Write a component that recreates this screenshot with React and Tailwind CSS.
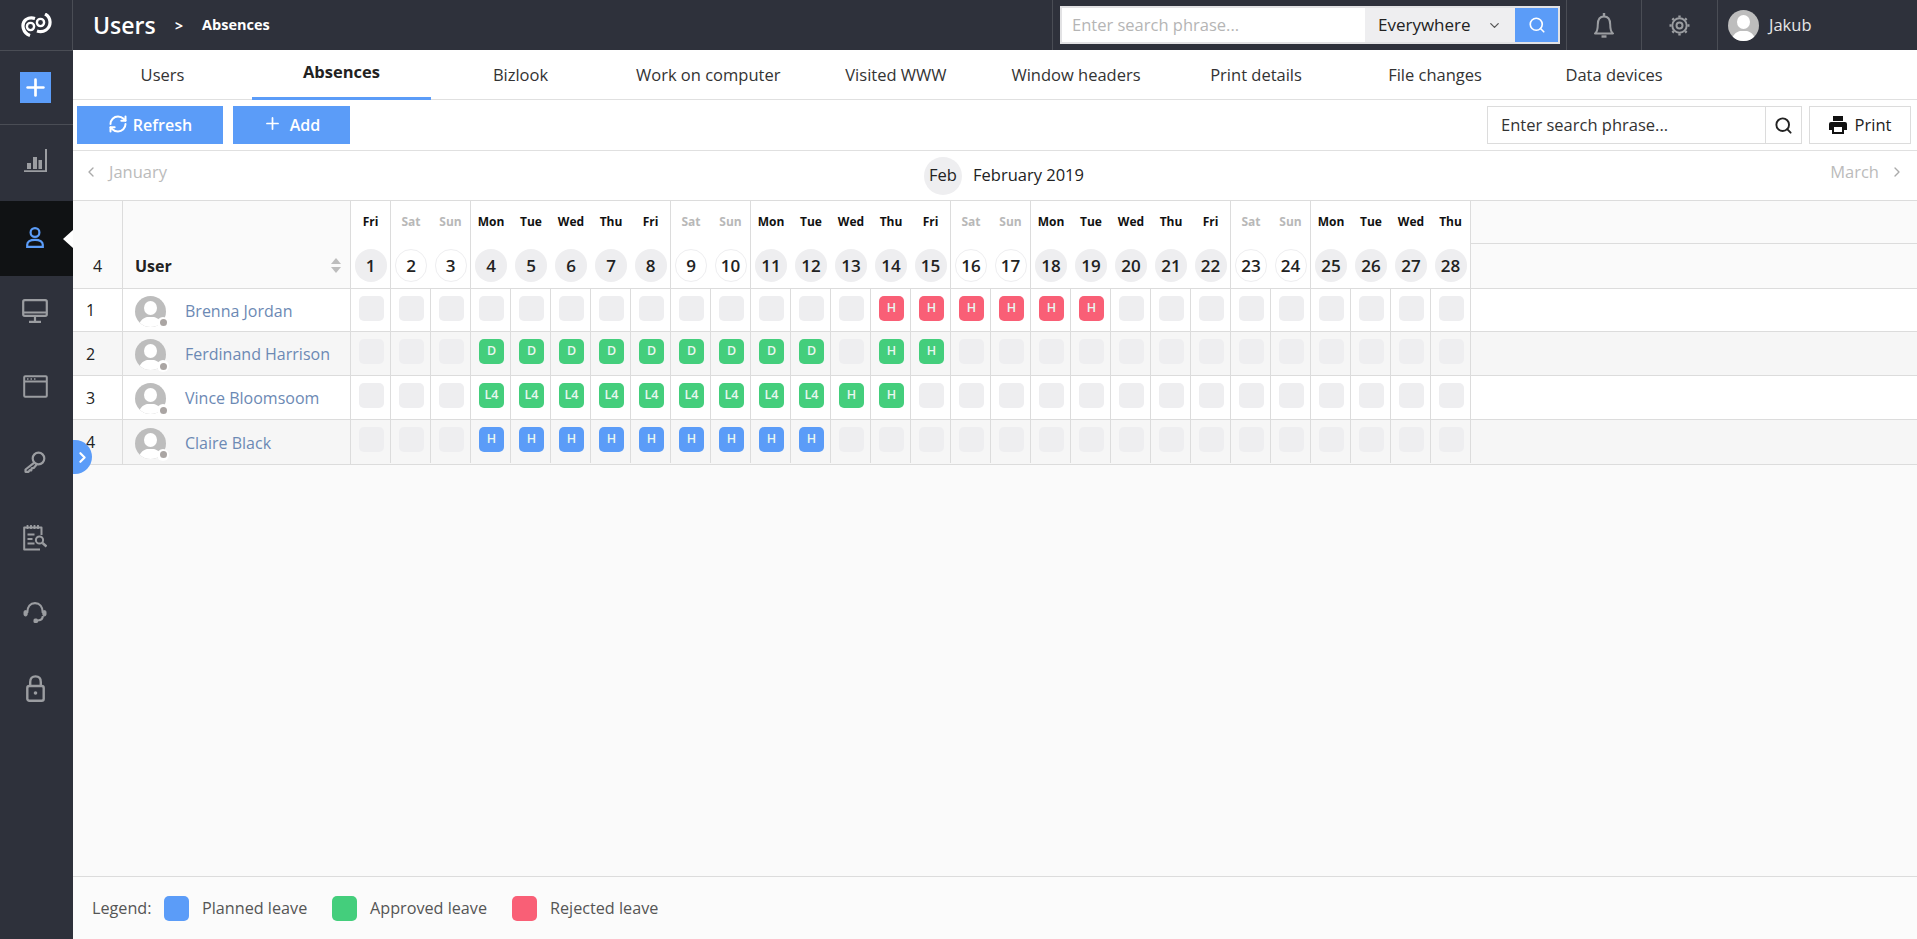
import { ChevronDown, ChevronLeft, ChevronRight, Plus, RefreshCw, Search } from 'lucide-react';

const tabs = ['Users', 'Absences', 'Bizlook', 'Work on computer', 'Visited WWW', 'Window headers', 'Print details', 'File changes', 'Data devices'];
const dayNames = ['Fri', 'Sat', 'Sun', 'Mon', 'Tue', 'Wed', 'Thu'];
const days = Array.from({ length: 28 }, (_, i) => ({ date: i + 1, name: dayNames[i % 7], weekend: i % 7 === 1 || i % 7 === 2 }));

// header has a line only after these days
const blockEnds = [1, 3, 8, 10, 15, 17, 22, 24, 28];

const chipColors = {
  blue: 'bg-[#5b9cf8]',
  green: 'bg-[#44ce7c]',
  red: 'bg-[#f95f76]',
  empty: 'bg-[#eeeef0]',
};

const fill = (from, to, color, label) => {
  const out = {};
  for (let d = from; d <= to; d++) out[d] = { color, label };
  return out;
};

const users = [
  { name: 'Brenna Jordan', cells: fill(14, 19, 'red', 'H') },
  { name: 'Ferdinand Harrison', cells: { ...fill(4, 12, 'green', 'D'), ...fill(14, 15, 'green', 'H') } },
  { name: 'Vince Bloomsoom', cells: { ...fill(4, 12, 'green', 'L4'), ...fill(13, 14, 'green', 'H') } },
  { name: 'Claire Black', cells: fill(4, 12, 'blue', 'H') },
];

function Logo() {
  return (
    <svg width="32" height="24" viewBox="0 0 32 24" fill="none" stroke="#fff">
      <path d="M10 22.500 C3 20 0.500 11 6 6.500 C9 4.500 12 4.500 15 5.500" strokeWidth="3.200" />
      <circle cx="10.500" cy="13.500" r="3.600" strokeWidth="2.400" />
      <circle cx="20.500" cy="9.500" r="3.600" strokeWidth="2.400" />
      <path d="M25 1 C31 4 32 13 26 17 C23 19 20 19 17 18" strokeWidth="3.200" />
    </svg>
  );
}

function StatsIcon() {
  return (
    <svg width="23" height="23" viewBox="0 0 23 23" fill="#9b9da1" stroke="none" className="-mt-[5px]">
      <rect x="3" y="14" width="4" height="6" />
      <rect x="9" y="8" width="4" height="12" />
      <rect x="14.500" y="11" width="3.500" height="9" />
      <path d="M21 0h2v23H0v-1.800h21z" />
    </svg>
  );
}

function UserIcon() {
  return (
    <svg width="18" height="21" viewBox="0 0 18 21" fill="none" stroke="#5b9cf8" strokeWidth="2.200" className="-mt-[3px]">
      <circle cx="9" cy="5.500" r="4.400" />
      <path d="M1.200 19.800v-2c0-3.200 2.800-5 7.800-5s7.800 1.800 7.800 5v2z" />
    </svg>
  );
}

function MonitorIcon() {
  return (
    <svg width="26" height="24" viewBox="0 0 26 24" fill="none" stroke="#9b9da1" strokeWidth="2.200" className="-mt-[2px]">
      <rect x="1.200" y="1.200" width="23.600" height="15.600" rx="1.500" />
      <path d="M2 13.500h22M13 17v5.500M7 22.800h12" />
    </svg>
  );
}

function WindowIcon() {
  return (
    <svg width="25" height="23" viewBox="0 0 25 23" fill="none" stroke="#9b9da1" strokeWidth="2">
      <rect x="1.200" y="1.200" width="22.600" height="20.600" rx="1" />
      <path d="M2 6.500h21" />
      <path d="M4 4h1.500M7.500 4h1.500M11 4h1.500" strokeWidth="1.500" />
    </svg>
  );
}

function KeyIcon() {
  return (
    <svg width="22" height="22" viewBox="0 0 22 22" fill="none" stroke="#9b9da1" strokeWidth="2.200">
      <circle cx="14.500" cy="7.500" r="5.800" />
      <path d="M10 11.800 1.500 18.500v2.300h3l1.200-1.600 1.600.1.400-2 2-.4 3-3.400" strokeLinejoin="round" />
    </svg>
  );
}

function ReportIcon() {
  return (
    <svg width="24" height="27" viewBox="0 0 24 27" fill="none" stroke="#9b9da1" strokeWidth="2">
      <path d="M18.500 11V3.500H1.200v22H17" strokeLinejoin="round" />
      <path d="M4.500 1v4M8 1v4M11.500 1v4M15 1v4" strokeWidth="1.800" />
      <path d="M4.500 10.500h7M4.500 15h5M4.500 19.500h7" />
      <circle cx="16.500" cy="16" r="3.600" />
      <path d="M19.500 19l4 3.500" strokeWidth="2.400" />
    </svg>
  );
}

function HeadsetIcon() {
  return (
    <svg width="24" height="21" viewBox="0 0 24 21" fill="none" stroke="#9b9da1" strokeWidth="2.200">
      <path d="M4.200 11C4.200 4.500 7.500 1.200 12 1.200s7.800 3.300 7.800 9.800" />
      <path d="M19.800 14c0 2.500-1.500 4.200-4.800 4.500" />
      <rect x="1" y="8.500" width="3.200" height="5.500" rx="1.600" fill="#9b9da1" strokeWidth="1" />
      <rect x="19.800" y="8.500" width="3.200" height="5.500" rx="1.600" fill="#9b9da1" strokeWidth="1" />
      <rect x="10.500" y="16.500" width="4.500" height="4.500" rx="1.500" fill="#9b9da1" stroke="none" />
    </svg>
  );
}

function LockIcon() {
  return (
    <svg width="19" height="27" viewBox="0 0 19 27" fill="none" stroke="#9b9da1" strokeWidth="2.400">
      <path d="M4.200 11V7c0-3.500 2-5.600 5.300-5.600s5.300 2.100 5.300 5.600v4" />
      <rect x="1.300" y="11" width="16.400" height="14.700" rx="2" />
      <circle cx="9.500" cy="18" r="1.800" fill="#9b9da1" stroke="none" />
    </svg>
  );
}

function BellIcon() {
  return (
    <svg width="20" height="26" viewBox="0 0 20 26" fill="none" stroke="#9b9da1" strokeWidth="2">
      <path d="M1 21.500c2-1.500 2.800-4 2.800-9 0-5 2.200-8 6.200-8s6.200 3 6.200 8c0 5 .8 7.500 2.800 9z" strokeLinejoin="round" />
      <path d="M10 1v3" strokeWidth="2.400" />
      <path d="M7.500 24.500h5" strokeWidth="2.400" />
    </svg>
  );
}

function GearIcon() {
  return (
    <svg width="23" height="23" viewBox="0 0 23 23" fill="none" stroke="#9b9da1">
      <circle cx="11.500" cy="11.500" r="7.200" strokeWidth="2" />
      <circle cx="11.500" cy="11.500" r="3" strokeWidth="2" />
      <path d="M11.500 1.500v2M11.500 19.500v2M1.500 11.500h2M19.500 11.500h2M4.400 4.400l1.400 1.400M17.200 17.200l1.400 1.400M4.400 18.600l1.400-1.400M17.200 5.800l1.400-1.400" strokeWidth="2.400" />
    </svg>
  );
}

function PrintIcon() {
  return (
    <svg width="18" height="18" viewBox="0 0 18 18" className="mr-[8px]">
      <path d="M4 0h10v5H4z" fill="#111" />
      <path d="M2 6h14a2 2 0 0 1 2 2v6h-3v4H3v-4H0V8a2 2 0 0 1 2-2z" fill="#111" />
      <path d="M5 11h8v5H5z" fill="#fff" />
    </svg>
  );
}

function Avatar({ size = 31 }) {
  return (
    <svg width={size} height={size} viewBox="0 0 31 31">
      <defs>
        <clipPath id="avatar-clip">
          <circle cx="15.500" cy="15.500" r="15.500" />
        </clipPath>
      </defs>
      <circle cx="15.500" cy="15.500" r="15.500" fill="#bdbdbd" />
      <g clipPath="url(#avatar-clip)" fill="#fff">
        <ellipse cx="15.500" cy="12" rx="6.500" ry="7" />
        <path d="M4 31c0-6 4-9 8-10h7c4 1 8 4 8 10z" />
      </g>
    </svg>
  );
}

function Chip({ cell }) {
  return (
    <div className={`w-[25px] h-[25px] rounded-[5px] flex items-center justify-center text-[12.5px] font-semibold text-[#e9f7ef] ${cell ? chipColors[cell.color] : chipColors.empty}`}>
      {cell ? cell.label : ''}
    </div>
  );
}

function Sidebar() {
  const items = [
    { icon: <StatsIcon />, h: 'h-[76px]' },
    { icon: <UserIcon />, h: 'h-[75px]', active: true },
    { icon: <MonitorIcon />, h: 'h-[72px]' },
    { icon: <WindowIcon />, h: 'h-[76px]' },
    { icon: <KeyIcon />, h: 'h-[75px]' },
    { icon: <ReportIcon />, h: 'h-[76px]' },
    { icon: <HeadsetIcon />, h: 'h-[75px]' },
    { icon: <LockIcon />, h: 'h-[76px]' },
  ];
  return (
    <aside className="w-[73px] shrink-0 bg-[#2e313b] flex flex-col">
      <div className="h-[51px] shrink-0 border-b border-[#4a4d55] border-r flex items-center justify-center">
        <Logo />
      </div>
      <div className="h-[74px] shrink-0 border-b border-[#4a4d55] flex items-center justify-center pr-[2px]">
        <div className="w-[31px] h-[31px] bg-[#5b9cf8] flex items-center justify-center">
          <Plus size={27} color="#fff" strokeWidth={2.4} />
        </div>
      </div>
      {items.map((item, i) => (
        <div key={i} className={`${item.h} shrink-0 relative flex items-center justify-center pr-[3px] ${item.active ? 'bg-[#101214]' : ''}`}>
          {item.icon}
          {item.active && (
            <div className="absolute right-0 top-1/2 -translate-y-1/2 w-0 h-0 border-y-[9px] border-y-transparent border-r-[10px] border-r-white" />
          )}
        </div>
      ))}
    </aside>
  );
}

function Topbar() {
  return (
    <header className="h-[50px] shrink-0 bg-[#2e313b] flex items-center text-white">
      <div className="pl-[20px] text-[23px] font-semibold w-[102px]">Users</div>
      <div className="text-[14px] font-bold w-[27px]">&gt;</div>
      <div className="text-[14.5px] font-bold">Absences</div>
      <div className="ml-auto w-[514px] h-full border-l border-[#4a4d55] pl-[7px] flex items-center">
        <div className="w-[500px] h-[38px] border-2 border-[#e2e2e4] bg-white flex">
          <div className="w-[303px] flex items-center pl-[10px] pt-[1px] text-[16.5px] text-[#b5b5b5]">Enter search phrase...</div>
          <div className="w-[150px] bg-[#eeeef0] flex items-center pl-[13px] text-[17px] font-medium text-[#222] whitespace-nowrap">
            Everywhere
            <ChevronDown size={15} className="ml-[16px] text-[#555]" />
          </div>
          <div className="flex-1 bg-[#5b9cf8] flex items-center justify-center">
            <Search size={18} color="#fff" strokeWidth={2.2} />
          </div>
        </div>
      </div>
      <div className="w-[75px] h-full border-l border-[#4a4d55] flex items-center justify-center">
        <BellIcon />
      </div>
      <div className="w-[76px] h-full border-l border-[#4a4d55] flex items-center justify-center">
        <GearIcon />
      </div>
      <div className="w-[200px] h-full border-l border-[#4a4d55] flex items-center pl-[10px]">
        <Avatar />
        <span className="ml-[10px] text-[16.5px] text-[#e6e6e6]">Jakub</span>
      </div>
    </header>
  );
}

function Tabs() {
  return (
    <nav className="h-[50px] shrink-0 bg-white border-b border-[#e0e0e0] flex">
      {tabs.map((t) =>
        t === 'Absences' ? (
          <div key={t} className="min-w-[179px] h-[50px] border-b-[3px] border-[#5b9cf8] flex items-center justify-center pb-[3px] text-[16.5px] font-bold text-[#222]">{t}</div>
        ) : (
          <div key={t} className="min-w-[179px] px-[26px] pt-[1px] whitespace-nowrap flex items-center justify-center text-[16.5px] font-medium text-[#333]">{t}</div>
        )
      )}
    </nav>
  );
}

function Toolbar() {
  return (
    <div className="h-[51px] shrink-0 bg-white border-b border-[#e0e0e0] flex items-center pl-[4px] pr-[6px]">
      <button className="w-[146px] h-[38px] bg-[#5b9cf8] text-white text-[16px] font-semibold flex items-center justify-center">
        <RefreshCw size={20} strokeWidth={2.4} className="mr-[5px] -mt-[2px]" />
        Refresh
      </button>
      <button className="ml-[10px] w-[117px] h-[38px] bg-[#5b9cf8] text-white text-[16px] font-semibold flex items-center justify-center">
        <Plus size={19} strokeWidth={2.2} className="mr-[8px] -mt-[4px]" />
        Add
      </button>
      <div className="ml-auto w-[315px] h-[38px] border border-[#dcdcdc] flex">
        <div className="flex-1 flex items-center pl-[13px] text-[16.5px] text-[#333]">Enter search phrase...</div>
        <div className="w-[36px] border-l border-[#dcdcdc] flex items-center justify-center">
          <Search size={19} color="#222" strokeWidth={2.4} />
        </div>
      </div>
      <button className="ml-[7px] w-[102px] h-[38px] border border-[#dcdcdc] flex items-center justify-center text-[16.5px] font-medium text-[#222]">
        <PrintIcon />
        Print
      </button>
    </div>
  );
}

function MonthBar() {
  return (
    <div className="h-[49px] shrink-0 bg-white flex items-center pl-[10px] relative text-[16.5px]">
      <ChevronLeft size={16} color="#aaa" strokeWidth={2} className="-mt-[7px]" />
      <span className="ml-[10px] text-[#bbb] -mt-[7px]">January</span>
      <div className="ml-[757px] flex items-center">
        <div className="w-[38px] h-[38px] rounded-full bg-[#eeeef0] flex items-center justify-center text-[16.5px] font-medium text-[#222]">Feb</div>
        <span className="ml-[11px] font-medium text-[#222]">February 2019</span>
      </div>
      <span className="ml-auto text-[#bbb] -mt-[7px]">March</span>
      <ChevronRight size={16} color="#aaa" strokeWidth={2} className="ml-[10px] mr-[12px] -mt-[7px]" />
    </div>
  );
}

function CalendarTable() {
  return (
    <div className="shrink-0 text-[#222]">
      <div className="flex h-[89px] border-y border-[#dcdcdc] bg-[#fafafa]">
        <div className="w-[50px] border-r border-[#dcdcdc] flex items-end justify-center pb-[10px] text-[16px]">4</div>
        <div className="w-[228px] border-r border-[#dcdcdc] flex items-end pl-[12px] pb-[10px] text-[16px] font-bold relative">
          User
          <div className="absolute right-[9px] bottom-[15px] flex flex-col gap-[3px]">
            <div className="w-0 h-0 border-x-[5px] border-x-transparent border-b-[6px] border-b-[#bdbdbd]" />
            <div className="w-0 h-0 border-x-[5px] border-x-transparent border-t-[6px] border-t-[#bdbdbd]" />
          </div>
        </div>
        {days.map((d) => (
          <div key={d.date} className={`w-10 flex flex-col items-center bg-white ${blockEnds.includes(d.date) ? 'border-r border-[#dcdcdc]' : ''}`}>
            <div className={`h-[43px] pt-[12px] text-[12px] font-bold ${d.weekend ? 'text-[#b8b8b8]' : 'text-[#111]'}`}>{d.name}</div>
            <div className={`mt-[5px] w-[32px] h-[33px] rounded-full flex items-center justify-center text-[17px] font-semibold ${d.weekend ? 'bg-white border border-[#eeeef0]' : 'bg-[#eeeef0]'}`}>{d.date}</div>
          </div>
        ))}
        <div className="flex-1 flex flex-col">
          <div className="h-[43px] border-b border-[#dcdcdc]" />
        </div>
      </div>
      {users.map((u, i) => (
        <div key={u.name} className={`flex border-b border-[#dcdcdc] ${i === 0 ? 'h-[43px]' : i === 3 ? 'h-[45px]' : 'h-[44px]'} ${i % 2 ? 'bg-[#f6f6f6]' : 'bg-white'}`}>
          <div className="w-[50px] border-r border-[#dcdcdc] flex items-center pl-[13px] text-[16px]">{i + 1}</div>
          <div className="w-[228px] border-r border-[#dcdcdc] flex items-center pl-[12px] text-[16px] text-[#6c89b4]">
            <div className="relative w-[31px] h-[31px] mt-[2px]">
              <Avatar />
              <div className="absolute -right-[3px] -bottom-[2px] w-[12px] h-[12px] rounded-full bg-white flex items-center justify-center">
                <div className="w-[7px] h-[7px] rounded-full bg-[#aaa5a3]" />
              </div>
            </div>
            <span className="ml-[19px] pt-[1px]">{u.name}</span>
          </div>
          {days.map((d) => (
            <div key={d.date} className={`w-10 border-r border-[#dcdcdc] pl-[8px] pt-[7px] ${i === 3 ? 'h-[43px]' : ''}`}>
              <Chip cell={u.cells[d.date]} />
            </div>
          ))}
        </div>
      ))}
    </div>
  );
}

function Legend() {
  const entries = [
    ['Planned leave', 'blue', 'w-[168px]'],
    ['Approved leave', 'green', 'w-[180px]'],
    ['Rejected leave', 'red', ''],
  ];
  return (
    <footer className="h-[63px] shrink-0 border-t border-[#dcdcdc] bg-[#fbfbfb] flex items-center pl-[19px] text-[16.2px] text-[#555]">
      <span className="w-[72px]">Legend:</span>
      {entries.map(([label, color, width]) => (
        <div key={label} className={`flex items-center ${width}`}>
          <div className={`w-[25px] h-[25px] rounded-[5px] shrink-0 mr-[13px] ${chipColors[color]}`} />
          <span className="whitespace-nowrap">{label}</span>
        </div>
      ))}
    </footer>
  );
}

export default function App() {
  return (
    <div className="h-[939px] w-[1917px] overflow-hidden flex flex-col font-['Open_Sans',sans-serif]">
      <div className="flex flex-1 min-h-0">
        <Sidebar />
        <main className="flex-1 min-w-0 flex flex-col bg-[#fafafa] relative">
          <Topbar />
          <Tabs />
          <Toolbar />
          <MonthBar />
          <CalendarTable />
          <div className="flex-1" />
          <Legend />
          <div className="absolute left-0 top-[440px] w-[19px] h-[34px] rounded-r-full bg-[#5b9cf8] flex items-center justify-center">
            <ChevronRight size={17} color="#fff" strokeWidth={3} />
          </div>
        </main>
      </div>
    </div>
  );
}
